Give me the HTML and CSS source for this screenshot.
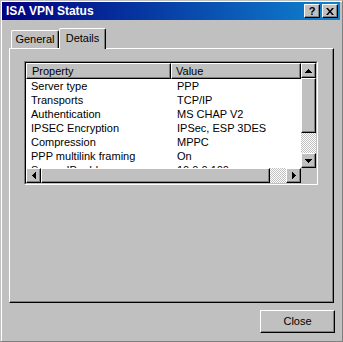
FILE: index.html
```html
<!DOCTYPE html>
<html>
<head>
    <title>ISA VPN Status</title>
    <link rel="stylesheet" href="styles.css">
</head>
<body>
<div class="window">
    <div class="titlebar">
        <span class="title">ISA VPN Status</span>
        <div class="caption-btns">
            <div class="cap-btn raised help">?</div>
            <div class="cap-btn raised">
                <svg width="8" height="7" viewBox="0 0 8 7"><path d="M0 0L2 0L4 2.5L6 0L8 0L5 3.5L8 7L6 7L4 4.5L2 7L0 7L3 3.5Z" fill="#000"/></svg>
            </div>
        </div>
    </div>

    <div class="content">
        <div class="tabs">
            <div class="tab">General</div>
            <div class="tab active">Details</div>
        </div>

        <div class="pane">
            <div class="listview">
                <div class="lv-frame">
                    <div class="lv-items">
                        <div class="lv-header">
                            <div class="hcell prop">Property</div>
                            <div class="hcell val">Value</div>
                        </div>
                        <div class="lv-row"><span class="prop">Server type</span><span class="val">PPP</span></div>
                        <div class="lv-row"><span class="prop">Transports</span><span class="val">TCP/IP</span></div>
                        <div class="lv-row"><span class="prop">Authentication</span><span class="val">MS CHAP V2</span></div>
                        <div class="lv-row"><span class="prop">IPSEC Encryption</span><span class="val">IPSec, ESP 3DES</span></div>
                        <div class="lv-row"><span class="prop">Compression</span><span class="val">MPPC</span></div>
                        <div class="lv-row"><span class="prop">PPP multilink framing</span><span class="val">On</span></div>
                        <div class="lv-row"><span class="prop">Server IP address</span><span class="val">10.0.0.100</span></div>
                    </div>

                    <div class="vscroll">
                        <div class="sb-btn raised">
                            <svg width="7" height="4" viewBox="0 0 7 4"><path d="M3 0h1v1h1v1h1v1h1v1H0V3h1V2h1V1h1z" fill="#000"/></svg>
                        </div>
                        <div class="sb-thumb raised v"></div>
                        <div class="sb-track"></div>
                        <div class="sb-btn raised">
                            <svg width="7" height="4" viewBox="0 0 7 4"><path d="M0 0h7v1H6v1H5v1H4v1H3V3H2V2H1V1H0z" fill="#000"/></svg>
                        </div>
                    </div>

                    <div class="hscroll">
                        <div class="sb-btn raised">
                            <svg width="4" height="7" viewBox="0 0 4 7"><path d="M3 0h1v7H3V6H2V5H1V4H0V3h1V2h1V1h1z" fill="#000"/></svg>
                        </div>
                        <div class="sb-thumb raised h"></div>
                        <div class="sb-track h"></div>
                        <div class="sb-btn raised">
                            <svg width="4" height="7" viewBox="0 0 4 7"><path d="M0 0h1v1h1v1h1v1h1v1H3v1H2v1H1v1H0z" fill="#000"/></svg>
                        </div>
                    </div>

                    <div class="sb-corner"></div>
                </div>
            </div>
        </div>

        <div class="footer">
            <div class="btn raised">Close</div>
        </div>
    </div>
</div>
</body>
</html>
```

FILE: styles.css
```css
* { box-sizing: border-box; }

body {
    margin: 0;
    background: #c0c0c0;
    font-family: "Liberation Sans", Arial, sans-serif;
    font-size: 11px;
    color: #000;
}

.window {
    width: 343px;
    height: 342px;
    background: #c0c0c0;
    border: 1px solid;
    border-color: #c0c0c0 #808080 #808080 #c0c0c0;
    box-shadow: inset 1px 1px #fff;
    padding: 1px 2px 2px 1px;
    display: flex;
    flex-direction: column;
}

.titlebar {
    height: 18px;
    display: flex;
    align-items: center;
    padding-left: 4px;
    background: linear-gradient(to right, #000080, #1084d0);
    color: #fff;
    font-weight: bold;
    font-size: 12px;
}

.caption-btns {
    margin-left: auto;
    margin-right: 2px;
    display: flex;
    gap: 2px;
}

.raised {
    background: #c0c0c0;
    border: 1px solid;
    border-color: #fff #000 #000 #fff;
    box-shadow: inset -1px -1px #808080;
}

.cap-btn {
    width: 16px;
    height: 14px;
    display: flex;
    align-items: center;
    justify-content: center;
    color: #000;
    line-height: 12px;
}

.cap-btn.help { font-size: 11px; font-weight: bold; padding-bottom: 1px; }

.content {
    flex: 1;
    padding: 8px 6px 0 7px;
    display: flex;
    flex-direction: column;
}

.tabs {
    height: 20px;
    padding-left: 2px;
    display: flex;
    align-items: flex-end;
}

.tab {
    height: 18px;
    width: 48px;
    padding-top: 1px;
    line-height: 14px;
    text-align: center;
    border: 1px solid;
    border-bottom: none;
    border-color: #fff #000 #000 #fff;
    border-radius: 2px 2px 0 0;
    box-shadow: inset -1px 0 #808080;
    background: #c0c0c0;
}

.tab.active {
    width: 47px;
    height: 21px;
    padding-top: 2px;
    margin-bottom: -1px;
    position: relative;
    z-index: 1;
}

.pane {
    height: 255px;
    border: 1px solid;
    border-color: #fff #000 #000 #fff;
    box-shadow: inset -1px -1px #808080;
    padding: 12px 0 0 14px;
}

.listview {
    width: 294px;
    height: 124px;
    border: 1px solid;
    border-color: #808080 #fff #fff #808080;
}

.lv-frame {
    height: 100%;
    border: 1px solid;
    border-color: #000 #c0c0c0 #c0c0c0 #000;
    display: grid;
    grid-template-columns: 275px 15px;
    grid-template-rows: 105px 15px;
}

.lv-items {
    background: #fff;
    overflow: hidden;
}

.lv-header {
    display: flex;
    height: 16px;
}

.hcell {
    height: 16px;
    line-height: 14px;
    background: #c0c0c0;
    border: 1px solid;
    border-color: #fff #000 #000 #fff;
    box-shadow: inset -1px -1px #808080;
}

.hcell.prop { width: 145px; padding-left: 5px; }
.hcell.val { flex: 1; padding-left: 4px; }

.lv-row {
    display: flex;
    height: 14px;
    line-height: 14px;
    white-space: nowrap;
}

.lv-row .prop { width: 145px; padding-left: 5px; }
.lv-row .val { padding-left: 6px; }

.vscroll {
    display: flex;
    flex-direction: column;
}

.hscroll {
    display: flex;
}

.sb-btn {
    width: 15px;
    height: 15px;
    display: flex;
    align-items: center;
    justify-content: center;
    flex-shrink: 0;
}

.sb-thumb.v { height: 55px; }
.sb-thumb.h { width: 229px; }

.sb-track {
    flex: 1;
    background: repeating-conic-gradient(#fff 0 25%, #c0c0c0 0 50%) 0 0 / 2px 2px;
}

.sb-corner { background: #c0c0c0; }

.footer {
    display: flex;
    justify-content: flex-end;
    padding-top: 7px;
    margin-right: -1px;
}

.btn {
    width: 75px;
    height: 23px;
    line-height: 21px;
    text-align: center;
}
```
